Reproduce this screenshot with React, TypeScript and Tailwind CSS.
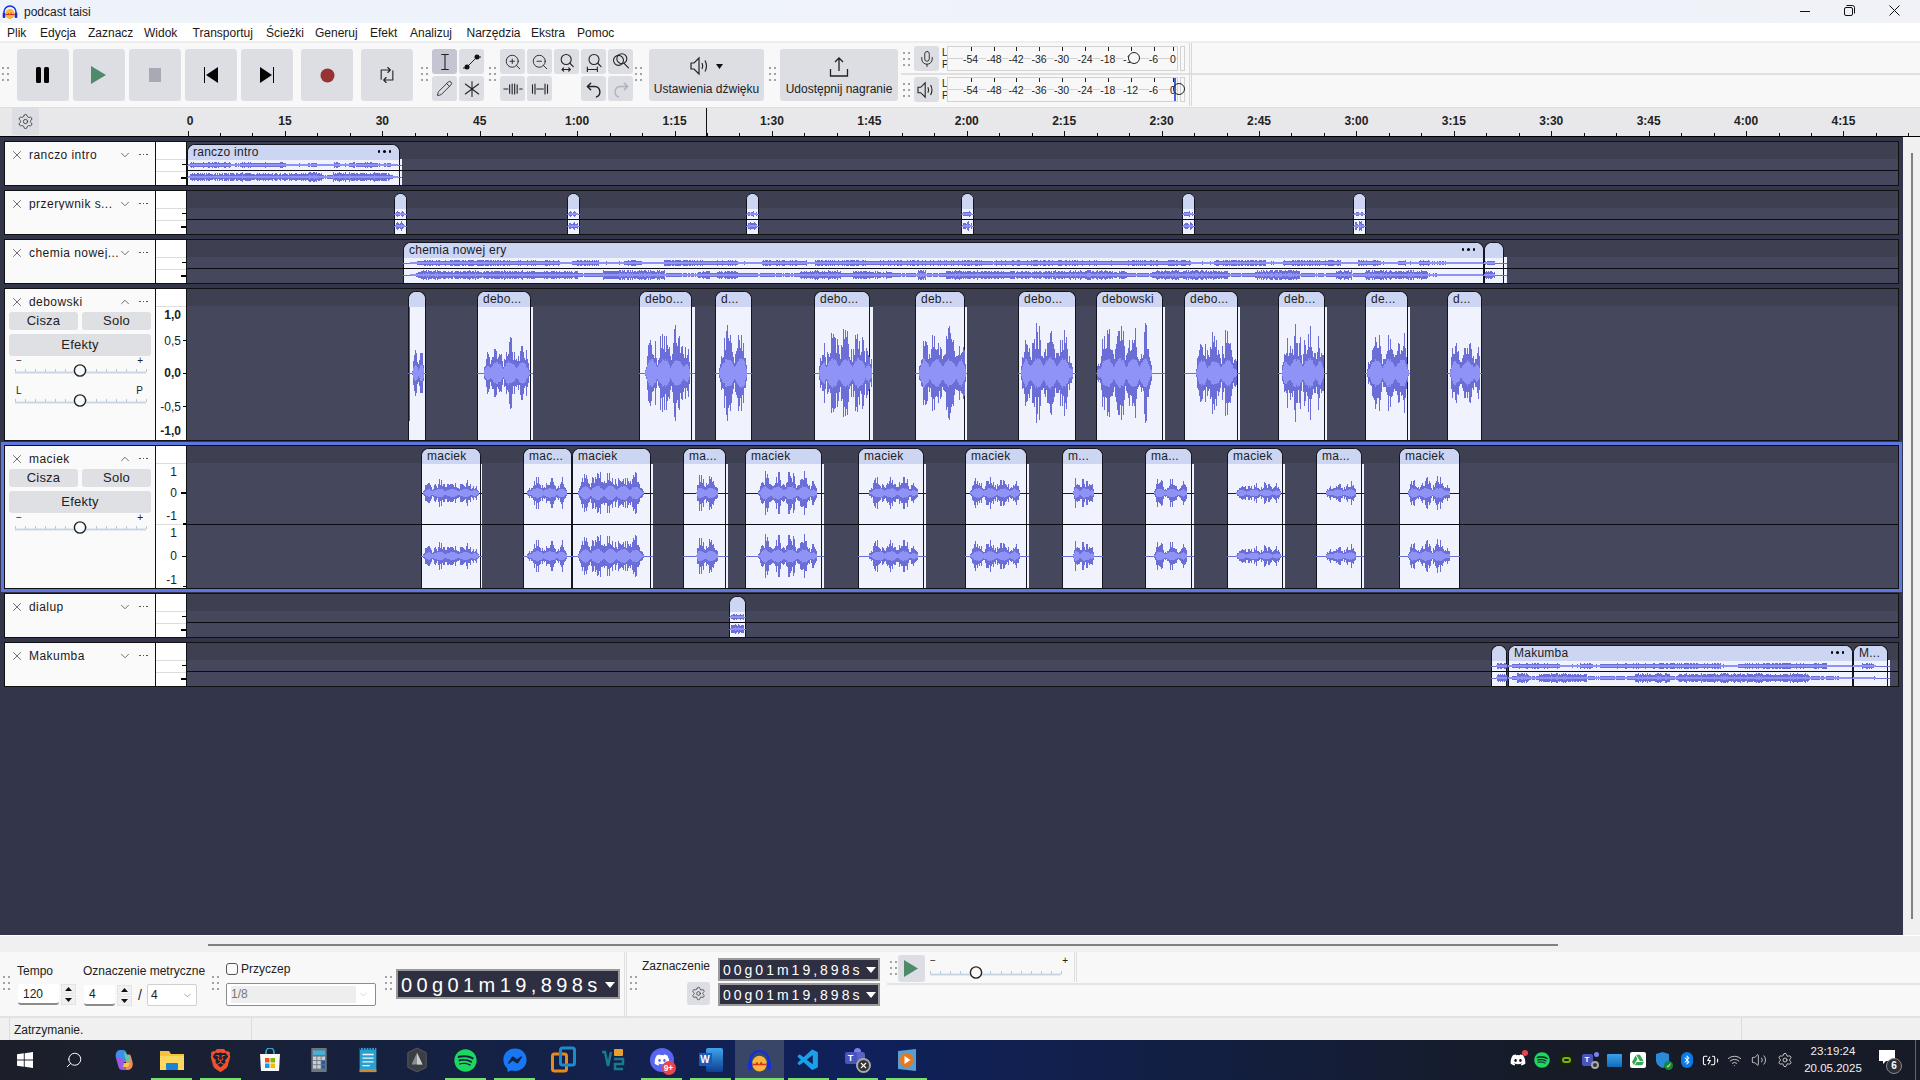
import React from "react";
import { ZoomIn, ZoomOut, Pencil, Mic, Settings, X, ChevronDown, ChevronUp, Wifi, Volume2, BatteryCharging, Search } from "lucide-react";
import { FaSpotify, FaDiscord, FaFacebookMessenger, FaBluetoothB } from "react-icons/fa";
import { SiBrave, SiGoogledrive } from "react-icons/si";
import { VscVscode } from "react-icons/vsc";

const CONTENT_LEFT = 187;

function rng(seed: number) {
  let a = seed >>> 0;
  return () => {
    a = (a + 0x6d2b79f5) >>> 0;
    let t = a;
    t = Math.imul(t ^ (t >>> 15), t | 1);
    t ^= t + Math.imul(t ^ (t >>> 7), t | 61);
    return ((t ^ (t >>> 14)) >>> 0) / 4294967296;
  };
}

type WaveSpec = { c: number; amp: number; lead: number; trail: number; seed: number; music?: boolean; dark?: boolean };

function wavePaths(w: number, s: WaveSpec) {
  const r = rng(s.seed);
  const start = s.lead;
  const end = w - s.trail;
  const len = Math.max(1, end - start);
  let peak = "";
  let rms = "";
  const phase = r() * 6;
  const lobes = Math.max(2, len / 13);
  let prevN = 0.5;
  let level = 0.8;
  let nextSeg = 0;
  for (let x = start; x < end; x++) {
    const t = (x - start) / len;
    let hh: number;
    let q: number;
    if (s.music) {
      if (x >= nextSeg) {
        level = r() > 0.8 ? 0.45 : 0.75 + 0.25 * r();
        nextSeg = x + 6 + Math.floor(r() * 22);
      }
      const edge = Math.min(1, t * 80, (1 - t) * 16);
      hh = Math.max(1, Math.round(s.amp * edge * level * (0.55 + 0.45 * r())));
      q = Math.max(1, Math.round(hh * 0.3));
    } else {
      const env = 0.42 + 0.58 * Math.abs(Math.sin(phase + t * lobes * Math.PI));
      const edge = Math.min(1, t * 9 + 0.25, (1 - t) * 7 + 0.2);
      const n = r() > 0.86 ? 0.9 + 0.1 * r() : 0.35 + 0.5 * r();
      const use = Math.max(n, 0.6 * prevN);
      prevN = n;
      hh = Math.max(1, Math.round(s.amp * env * use * edge));
      q = Math.max(1, Math.round(s.amp * env * edge * 0.3 * (0.8 + 0.2 * r())));
    }
    peak += `M${x + 0.5} ${s.c - hh}V${s.c + hh}`;
    rms += `M${x + 0.5} ${s.c - q}V${s.c + q}`;
  }
  return { peak, rms, start, end };
}

function Wave({ w, spec }: { w: number; spec: WaveSpec }) {
  const { peak, rms, start, end } = wavePaths(w, spec);
  return (
    <g shapeRendering="crispEdges" fill="none">
      <path d={`M0 ${spec.c + 0.5}H${w}`} stroke="#6a6ed8" />
      {spec.dark ? <path d={`M0 ${spec.c + 0.5}H${start}M${end} ${spec.c + 0.5}H${w}`} stroke="#1a1a40" /> : null}
      <path d={peak} stroke="#6a6ed6" />
      <path d={rms} stroke="#8f93f6" />
    </g>
  );
}

type ClipData = {
  x: number;
  w: number;
  title?: string;
  dots?: boolean;
  tail?: number;
  lead?: number;
  trail?: number;
  amp?: number;
  seed: number;
};

function Clip({ d, waves, headerEnd = 18 }: { d: ClipData; waves: WaveSpec[]; headerEnd?: number }) {
  const left = d.x - CONTENT_LEFT - 1;
  const width = d.w + 2;
  const tail = d.tail ?? 0;
  return (
    <>
      <div
        className="absolute top-[2px] bottom-0 rounded-t-[8px] border-x border-t border-[#14151f] bg-[#f0f2fe] overflow-hidden"
        style={{ left, width }}
      >
        <div className="flex items-center justify-between bg-[#ccd5f2] pl-[5px] pr-[8px] pb-[2px] text-[12px] tracking-[0.25px] text-[#1d1d25] leading-none whitespace-nowrap h-[15px]">
          <span>{d.title}</span>
          {d.dots ? (
            <span className="flex gap-[3px]">
              <i className="w-[2.5px] h-[2.5px] rounded-full bg-black" />
              <i className="w-[2.5px] h-[2.5px] rounded-full bg-black" />
              <i className="w-[2.5px] h-[2.5px] rounded-full bg-black" />
            </span>
          ) : null}
        </div>
      </div>
      {tail > 0 ? (
        <div className="absolute bottom-0 bg-[#f0f2fe]" style={{ left: left + width, width: tail, top: headerEnd }} />
      ) : null}
      <svg className="absolute top-0 overflow-visible" style={{ left }} width={width + tail} height={10}>
        {waves.map((s, i) => (
          <Wave key={i} w={width + tail} spec={s} />
        ))}
      </svg>
    </>
  );
}

function Slider({ thumb = 65 }: { thumb?: number }) {
  const w = 131;
  return (
    <svg width={w + 2} height={16} className="block">
      {Array.from({ length: 14 }).map((_, i) => (
        <rect key={i} x={Math.round(i * (w / 13))} y={6} width={1} height={3} fill="#b9c6d4" />
      ))}
      <rect x={0} y={8.5} width={w} height={2} fill="#c9d7e5" />
      <circle cx={thumb} cy={7.5} r={5.6} fill="#fafafa" stroke="#222" strokeWidth={1.4} />
    </svg>
  );
}

function SliderBlock({ l, r, cls = "" }: { l: string; r: string; cls?: string }) {
  return (
    <div className={`px-[10px] ${cls}`}>
      <div className="flex justify-between h-[12px] items-center text-[10px] leading-none text-[#222]">
        <span className="ml-[1px]">{l}</span>
        <span className="mr-[2px]">{r}</span>
      </div>
      <div className="-mt-[4px]">
        <Slider />
      </div>
    </div>
  );
}

function Dots() {
  return (
    <span className="flex gap-[2px]">
      <i className="w-[1.5px] h-[1.5px] bg-[#555]" />
      <i className="w-[1.5px] h-[1.5px] bg-[#555]" />
      <i className="w-[1.5px] h-[1.5px] bg-[#555]" />
    </span>
  );
}

function PanelHead({ name, open }: { name: string; open?: boolean }) {
  return (
    <div className="flex items-center h-[23px] pt-[2px] text-[12px] tracking-[0.45px] text-[#1b1b22]">
      <X size={14} strokeWidth={1.1} className="ml-[5px] text-[#222] shrink-0" />
      <span className="ml-[5px] w-[92px] whitespace-nowrap overflow-hidden leading-none">{name}</span>
      {open ? (
        <ChevronUp size={14} strokeWidth={1.2} className="text-[#333] shrink-0 -ml-[3px]" />
      ) : (
        <ChevronDown size={14} strokeWidth={1.2} className="text-[#333] shrink-0 -ml-[3px]" />
      )}
      <span className="ml-[7px]">
        <Dots />
      </span>
    </div>
  );
}

function Mb({ children, cls }: { children: React.ReactNode; cls: string }) {
  return (
    <div className={`flex items-center justify-center rounded-[3px] bg-[#dfe0e4] text-[13px] tracking-[0.2px] text-[#222] ${cls}`}>{children}</div>
  );
}

function PanelControls() {
  return (
    <div className="px-[4px]">
      <div className="flex gap-[4px]">
        <Mb cls="w-[69px] h-[18px]">Cisza</Mb>
        <Mb cls="w-[69px] h-[18px]">Solo</Mb>
      </div>
      <Mb cls="w-[142px] h-[22px] mt-[4px]">Efekty</Mb>
    </div>
  );
}

function RulerCollapsed() {
  return (
    <div className="relative w-[31px] shrink-0 bg-white border-r border-[#111]">
      <div className="absolute left-0 right-0 top-[17px] h-px bg-[#dcdcdc]" />
      <div className="absolute left-0 right-0 top-[29px] h-px bg-[#dcdcdc]" />
      <div className="absolute right-0 top-[22px] w-[4px] h-px bg-black" />
      <div className="absolute right-0 top-[35px] w-[5px] h-[2px] bg-black" />
    </div>
  );
}

function Track({
  name,
  panel,
  ruler,
  h,
  lineY,
  children,
  selected,
}: {
  name: string;
  panel?: React.ReactNode;
  ruler?: React.ReactNode;
  h: string;
  lineY: string;
  children?: React.ReactNode;
  selected?: boolean;
}) {
  return (
    <div className={`flex w-[1895px] border border-[#111] ${h} ${selected ? "ring-[3px] ring-[#5d76e0]" : ""}`}>
      <div className="w-[151px] shrink-0 bg-[#fafafa] border-r border-[#111]">
        <PanelHead name={name} open={!!panel} />
        {panel}
      </div>
      {ruler ?? <RulerCollapsed />}
      <div className="relative flex-1 bg-[#45485c] overflow-hidden">
        <div className="absolute inset-x-0 top-0 h-[17px] bg-[#3e3f50]" />
        {children}
        <div className={`absolute inset-x-0 h-px bg-[#0c0c12] ${lineY}`} />
      </div>
    </div>
  );
}

const t2Clips = [395, 568, 747, 962, 1183, 1354];
const t4Clips: ClipData[] = [
  { x: 409, w: 16, lead: 4, trail: 2, amp: 30, seed: 11 },
  { x: 478, w: 52, title: "debo...", tail: 2, lead: 7, trail: 3, amp: 40, seed: 12 },
  { x: 640, w: 51, title: "debo...", tail: 3, lead: 6, trail: 5, amp: 50, seed: 13 },
  { x: 716, w: 35, title: "d...", lead: 4, trail: 5, amp: 52, seed: 14 },
  { x: 815, w: 54, title: "debo...", tail: 3, lead: 5, trail: 1, amp: 52, seed: 15 },
  { x: 916, w: 48, title: "deb...", tail: 2, lead: 4, trail: 1, amp: 50, seed: 16 },
  { x: 1019, w: 56, title: "debo...", lead: 3, trail: 3, amp: 54, seed: 17 },
  { x: 1097, w: 65, title: "debowski", tail: 2, lead: 1, trail: 13, amp: 52, seed: 18 },
  { x: 1185, w: 52, title: "debo...", tail: 2, lead: 12, trail: 3, amp: 46, seed: 19 },
  { x: 1279, w: 45, title: "deb...", tail: 2, lead: 4, trail: 3, amp: 52, seed: 20 },
  { x: 1366, w: 41, title: "de...", tail: 2, lead: 2, trail: 1, amp: 48, seed: 21 },
  { x: 1448, w: 33, title: "d...", lead: 3, trail: 2, amp: 44, seed: 22 },
];
const t5Clips: ClipData[] = [
  { x: 422, w: 58, title: "maciek", tail: 1, lead: 2, trail: 3, amp: 15, seed: 31 },
  { x: 524, w: 47, title: "mac...", lead: 4, trail: 5, amp: 17, seed: 32 },
  { x: 573, w: 77, title: "maciek", tail: 2, lead: 6, trail: 9, amp: 25, seed: 33 },
  { x: 684, w: 41, title: "ma...", tail: 2, lead: 13, trail: 10, amp: 20, seed: 34 },
  { x: 746, w: 75, title: "maciek", tail: 2, lead: 13, trail: 7, amp: 23, seed: 35 },
  { x: 859, w: 64, title: "maciek", tail: 2, lead: 11, trail: 8, amp: 17, seed: 36 },
  { x: 966, w: 60, title: "maciek", tail: 2, lead: 5, trail: 9, amp: 17, seed: 37 },
  { x: 1063, w: 39, title: "m...", lead: 11, trail: 9, amp: 18, seed: 38 },
  { x: 1146, w: 45, title: "ma...", tail: 2, lead: 9, trail: 7, amp: 15, seed: 39 },
  { x: 1228, w: 54, title: "maciek", tail: 2, lead: 9, trail: 4, amp: 12, seed: 40 },
  { x: 1317, w: 44, title: "ma...", tail: 2, lead: 10, trail: 8, amp: 13, seed: 41 },
  { x: 1400, w: 59, title: "maciek", lead: 9, trail: 10, amp: 18, seed: 42 },
];

function stereoSmall(seed: number, lead: number, trail: number, music = true): WaveSpec[] {
  return [
    { c: 23, amp: 3.5, lead, trail, seed, music },
    { c: 35, amp: 5.5, lead, trail, seed: seed + 1, music },
  ];
}

function Grip({ cls = "" }: { cls?: string }) {
  return (
    <svg width={7} height={14} className={`shrink-0 ${cls}`}>
      {[0, 6, 12].map((y) => (
        <g key={y}>
          <rect x={0} y={y} width={2} height={2} fill="#a3a3a3" />
          <rect x={5} y={y} width={2} height={2} fill="#a3a3a3" />
        </g>
      ))}
    </svg>
  );
}

function TBtn({ children, active, cls = "" }: { children: React.ReactNode; active?: boolean; cls?: string }) {
  return (
    <div className={`flex items-center justify-center rounded-[3px] ${active ? "bg-[#c3c6d2]" : "bg-[#dddee3]"} ${cls}`}>
      {children}
    </div>
  );
}

function Big({ children }: { children: React.ReactNode }) {
  return <TBtn cls="w-[52px] h-[52px] shrink-0">{children}</TBtn>;
}

function S({ children, size = 20, sw = 1.3 }: { children: React.ReactNode; size?: number; sw?: number }) {
  return (
    <svg width={size} height={size} viewBox="0 0 24 24" fill="none" stroke="#222" strokeWidth={sw} strokeLinecap="round" strokeLinejoin="round">
      {children}
    </svg>
  );
}

function AudacityLogo({ size = 16 }: { size?: number }) {
  return (
    <svg width={size} height={size} viewBox="0 0 24 24">
      <ellipse cx="12" cy="15" rx="7" ry="7.500" fill="#f4b63e" />
      <path d="M5.500 15h3l1-2 2 3 2-3 1.500 2h3.500v1.500h-13Z" fill="#e32b14" />
      <path d="M3 15V12a9 9 0 0 1 18 0v3" fill="none" stroke="#0f2fe0" strokeWidth="2.200" />
      <rect x="1" y="13" width="4" height="8" rx="1.600" fill="#0f2fe0" />
      <rect x="19" y="13" width="4" height="8" rx="1.600" fill="#0f2fe0" />
    </svg>
  );
}

const meterLabels: [string, number][] = [
  ["-54", 970.6],
  ["-48", 994],
  ["-42", 1016],
  ["-36", 1039],
  ["-30", 1061.6],
  ["-24", 1085],
  ["-18", 1107.8],
  ["-12", 1130.6],
  ["-6", 1153.5],
  ["0", 1173],
];

function Meter({ thumb, blue }: { thumb: number; blue?: boolean }) {
  return (
    <div className="flex">
      <div className="w-[7px] text-[10px] leading-[12px] text-[#222] ml-[3px] pt-[1px]">
        <div>L</div>
        <div>P</div>
      </div>
      <div className="relative w-[231px] h-[25px] border border-[#d2d2d2] bg-[#f8f8f8] -ml-[2px]">
        <div className="absolute inset-x-0 top-[11px] h-px bg-[#d2d2d2]" />
        {meterLabels.map(([t, x]) => (
          <React.Fragment key={t}>
            <div className="absolute top-0 w-px h-[4px] bg-[#222]" style={{ left: x - 948 }} />
            <span
              className="absolute top-[6px] -translate-x-1/2 bg-[#f8f8f8] text-[10.5px] leading-[12px] text-[#222]"
              style={{ left: x - 948 }}
            >
              {t}
            </span>
          </React.Fragment>
        ))}
        {blue ? <div className="absolute top-0 bottom-0 left-[226px] w-[2px] bg-[#4a62d8]" /> : null}
        <div
          className={`absolute top-[5px] w-[12px] h-[12px] rounded-full border-[1.5px] border-[#222] -translate-x-1/2 ${blue ? "" : "bg-[#f8f8f8]"}`}
          style={{ left: thumb - 948 }}
        />
      </div>
      <div className="w-[5px] h-[25px] border border-[#d2d2d2] bg-[#f8f8f8] ml-[2px]" />
      <div className="w-[3px] h-[32px] -mt-[3px] border-x border-[#d8d8d8] ml-[4px]" />
    </div>
  );
}

const menu = [
  ["Plik", "w-[33px]"],
  ["Edycja", "w-[48px]"],
  ["Zaznacz", "w-[56px]"],
  ["Widok", "w-[48.6px]"],
  ["Transportuj", "w-[73.4px]"],
  ["Ścieżki", "w-[49px]"],
  ["Generuj", "w-[55px]"],
  ["Efekt", "w-[40px]"],
  ["Analizuj", "w-[56.5px]"],
  ["Narzędzia", "w-[64.5px]"],
  ["Ekstra", "w-[46px]"],
  ["Pomoc", "w-[50px]"],
];

const rulerLabels = ["0", "15", "30", "45", "1:00", "1:15", "1:30", "1:45", "2:00", "2:15", "2:30", "2:45", "3:00", "3:15", "3:30", "3:45", "4:00", "4:15"];

function TimeBox({ big }: { big?: boolean }) {
  return big ? (
    <div className="flex items-center w-[224px] h-[30px] border-2 border-double border-[#9a9a9a] bg-[#2e3042] pl-[3px] pt-[2px] text-white text-[20px] tracking-[4.4px] leading-none whitespace-nowrap">
      <span>00g01m19,898s</span>
      <svg width="10" height="6" className="ml-auto mr-[3px] shrink-0"><path d="M0 0H10L5 6Z" fill="#fff" /></svg>
    </div>
  ) : (
    <div className="flex items-center w-[162px] h-[23px] border-2 border-double border-[#9a9a9a] bg-[#2e3042] pl-[3px] text-white text-[14px] tracking-[3px] leading-none whitespace-nowrap">
      <span>00g01m19,898s</span>
      <svg width="10" height="6" className="ml-auto mr-[2px] shrink-0"><path d="M0 0H10L5 6Z" fill="#fff" /></svg>
    </div>
  );
}

function Spin() {
  return (
    <div className="flex flex-col gap-[1px] w-[15px] ml-[2px]">
      <div className="flex h-[10px] items-center justify-center bg-[#f0f0f0] border border-[#e4e4e4]">
        <svg width="7" height="4"><path d="M0 4H7L3.500 0Z" fill="#111" /></svg>
      </div>
      <div className="flex h-[10px] items-center justify-center bg-[#f0f0f0] border border-[#e4e4e4]">
        <svg width="7" height="4"><path d="M0 0H7L3.500 4Z" fill="#111" /></svg>
      </div>
    </div>
  );
}

function Field({ cls, children }: { cls: string; children: React.ReactNode }) {
  return <div className={`flex items-center bg-white border-b-2 border-[#8c8c8c] rounded-[3px] pl-[5px] text-[12px] text-[#222] h-[21px] ${cls}`}>{children}</div>;
}

function TrayWrap({ children, x }: { children: React.ReactNode; x: string }) {
  return <div className={`flex items-center justify-center h-[24px] shrink-0 ${x}`}>{children}</div>;
}

const taskIcons: { el: React.ReactNode; on?: boolean; active?: boolean }[] = [
  {
    el: (
      <svg width="16" height="16" viewBox="0 0 16 16">
        <path d="M0 2.200 6.800 1.300V7.500H0ZM7.700 1.200 16 0V7.500H7.700ZM0 8.400H6.800V14.700L0 13.800ZM7.700 8.400H16V16L7.700 14.800Z" fill="#fff" />
      </svg>
    ),
  },
  { el: <Search size={18} strokeWidth={1.3} className="text-white -scale-x-100" /> },
  {
    el: (
      <svg width="24" height="24" viewBox="0 0 24 24" fill="none">
        <path d="M9 2h3c2 0 3 1 3.500 3l2.500 9H8.500L5 10C4 6 5.500 2 9 2Z" fill="#3d8fe8" />
        <path d="M5 10l2.500 9c.5 2 2 3 4 3h2c2 0 3-1 1.500-3l-4-9Z" fill="#9a5be0" />
        <path d="M15 22h2c3.500 0 5.500-4 4.500-8L20 8.500c-.5-2-2-2.500-3.500-1.500L15 14Z" fill="#f08a5a" />
        <path d="M13 4l4 3 3 2-3 6-3-5Z" fill="#5fc4a8" />
        <path d="M12 19h5l2-4h-6Z" fill="#f2c744" />
      </svg>
    ),
  },
  {
    on: true,
    el: (
      <svg width="24" height="24" viewBox="0 0 24 24">
        <path d="M0 3h9l2 3h13v16H0Z" fill="#f5c33b" />
        <path d="M0 8h24v14H0Z" fill="#fcd860" />
        <rect x="6" y="15" width="12" height="7" rx="1" fill="#1a82d8" />
      </svg>
    ),
  },
  { on: true, el: <SiBrave size={23} color="#f0502a" /> },
  {
    el: (
      <svg width="24" height="24" viewBox="0 0 24 24">
        <path d="M8 7V4a4 4 0 0 1 8 0v3" fill="none" stroke="#35b2d8" strokeWidth="1.500" />
        <path d="M2 6h20l-1 17H3Z" fill="#f8f8f8" />
        <rect x="7" y="10" width="4.500" height="4.500" fill="#f25022" />
        <rect x="12.500" y="10" width="4.500" height="4.500" fill="#7fba00" />
        <rect x="7" y="15.500" width="4.500" height="4.500" fill="#00a4ef" />
        <rect x="12.500" y="15.500" width="4.500" height="4.500" fill="#ffb900" />
      </svg>
    ),
  },
  {
    el: (
      <svg width="20" height="24" viewBox="0 0 20 28">
        <rect x="1" y="0" width="18" height="28" rx="1" fill="#6c7680" />
        <rect x="3" y="3" width="14" height="5" fill="#3fb4e0" />
        {[10, 15, 20].map((y) =>
          [3, 8, 13].map((x) => <rect key={`${x}${y}`} x={x} y={y} width="4" height="4" fill={x === 13 && y > 10 ? "#1f5fa8" : "#c8ced4"} />)
        )}
      </svg>
    ),
  },
  {
    el: (
      <svg width="20" height="26" viewBox="0 0 20 28">
        <rect x="1" y="1" width="18" height="26" fill="#2ba0d0" />
        <rect x="1" y="24" width="18" height="3" fill="#c88a3a" />
        <path d="M4 8h12M4 12h12M4 16h12M4 20h8" stroke="#e6f6fc" strokeWidth="1.500" />
        <path d="M2 1v2M5 1v2M8 1v2M11 1v2M14 1v2M17 1v2" stroke="#123" strokeWidth="1" />
      </svg>
    ),
  },
  {
    el: (
      <svg width="22" height="26" viewBox="0 0 24 28">
        <path d="M12 1 22 6v16l-10 5-10-5V6Z" fill="#3a3d42" stroke="#5a5d62" />
        <path d="M12 6 18 19H6Z" fill="#8a8d92" />
        <path d="M12 6 18 19H12Z" fill="#c8cbd0" />
      </svg>
    ),
  },
  { on: true, el: <FaSpotify size={23} color="#1ed760" /> },
  { on: true, el: <FaFacebookMessenger size={24} color="#1877f2" /> },
  {
    el: (
      <svg width="25" height="28" viewBox="0 0 25 28">
        <rect x="1.500" y="8" width="14" height="17" rx="2" fill="none" stroke="#e8891a" strokeWidth="3" />
        <rect x="9.500" y="2" width="14" height="17" rx="2" fill="none" stroke="#1b8ad0" strokeWidth="3" />
      </svg>
    ),
  },
  {
    el: (
      <svg width="24" height="26" viewBox="0 0 24 26">
        <path d="M1 5h3l3 14 3-14" fill="none" stroke="#1b7a8a" strokeWidth="2.500" />
        <rect x="13" y="2" width="9" height="7" rx="1" fill="#e8a030" />
        <path d="M13 12h9v5h-8v5h8" fill="none" stroke="#1b7a8a" strokeWidth="2.500" />
      </svg>
    ),
  },
  {
    on: true,
    el: (
      <span className="relative flex items-center justify-center w-[24px] h-[24px] rounded-full bg-[#5865f2]">
        <FaDiscord size={16} color="#fff" />
        <span className="absolute -right-[2px] bottom-[-3px] flex items-center justify-center w-[14px] h-[14px] rounded-full bg-[#e8454f] text-[8.5px] font-bold text-white leading-none">9+</span>
      </span>
    ),
  },
  {
    on: true,
    el: (
      <span className="relative flex w-[24px] h-[24px]">
        <span className="absolute right-0 top-0 w-[17px] h-[24px] bg-gradient-to-b from-[#41a5ee] to-[#103f91] rounded-[2px]" />
        <span className="absolute left-0 top-[5px] flex items-center justify-center w-[13px] h-[13px] bg-[#185abd] text-white text-[10px] font-bold leading-none">W</span>
      </span>
    ),
  },
  { on: true, active: true, el: <AudacityLogo size={25} /> },
  { on: true, el: <VscVscode size={25} color="#1b9fe8" /> },
  {
    on: true,
    el: (
      <span className="relative flex w-[26px] h-[26px]">
        <span className="absolute left-[9px] top-[1px] w-[7px] h-[7px] rounded-full bg-[#7b83eb]" />
        <span className="absolute left-[8px] top-[5px] w-[12px] h-[12px] rounded-[3px] bg-[#5a62c4]" />
        <span className="absolute left-0 top-[5px] flex items-center justify-center w-[12px] h-[12px] rounded-[2px] bg-[#4b53bc] text-white text-[9px] font-bold leading-none">T</span>
        <span className="absolute right-0 bottom-0 flex items-center justify-center w-[15px] h-[15px] rounded-full bg-[#2f3136] border-2 border-[#a8a8a8]">
          <X size={9} color="#fff" strokeWidth={3} />
        </span>
      </span>
    ),
  },
  {
    on: true,
    el: (
      <svg width="22" height="24" viewBox="0 0 22 24">
        <path d="M2 3 20 1v22L2 21Z" fill="#5a9ed0" />
        <rect x="4" y="5" width="13" height="14" rx="6" fill="#e8781e" />
        <path d="M8.500 8v8l6-4Z" fill="#fff" />
      </svg>
    ),
  },
];

export default function App() {
  return (
    <div className="w-[1920px] h-[1080px] overflow-hidden flex flex-col [font-family:'Liberation_Sans',sans-serif] text-[#222]">
      {/* Title bar */}
      <div className="flex items-center h-[23px] shrink-0 bg-gradient-to-r from-[#eef3fb] to-[#f0f2f8]">
        <div className="ml-[2px]">
          <AudacityLogo size={16} />
        </div>
        <span className="ml-[6px] text-[12px] text-[#1a1a1a]">podcast taisi</span>
        <div className="ml-auto flex mr-[3px] -mt-[2px]">
          <div className="flex items-center justify-center w-[45px]">
            <svg width="10" height="10"><path d="M0 5.500H10" stroke="#111" /></svg>
          </div>
          <div className="flex items-center justify-center w-[45px]">
            <svg width="11" height="11" fill="none" stroke="#111"><rect x="0.500" y="2.500" width="8" height="8" rx="1.500" /><path d="M2.500 0.500H8.500a2 2 0 0 1 2 2V8.500" /></svg>
          </div>
          <div className="flex items-center justify-center w-[45px]">
            <svg width="11" height="11" stroke="#111"><path d="M0.500 0.500 10.500 10.500M10.500 0.500 0.500 10.500" /></svg>
          </div>
        </div>
      </div>

      {/* Menu */}
      <div className="flex items-center h-[18px] shrink-0 bg-white pl-[7px] pt-[2px] text-[12px] text-[#1a1a1a]">
        {menu.map(([t, w]) => (
          <span key={t} className={w}>{t}</span>
        ))}
      </div>

      {/* Main toolbar */}
      <div className="flex h-[67px] shrink-0 bg-[#f8f8f8] border-t-2 border-b border-t-[#eeeeee] border-b-[#dedede] pl-[2px]">
        <Grip cls="mt-[24px]" />
        <div className="flex gap-[4px] ml-[8px] mt-[6px] h-[52px]">
          <Big>
            <svg width="14" height="16"><rect x="0" y="0" width="5" height="16" rx="1.500" fill="#050505" /><rect x="8" y="0" width="5" height="16" rx="1.500" fill="#050505" /></svg>
          </Big>
          <Big>
            <svg width="16" height="18"><path d="M0 0 15 9 0 18Z" fill="#4f8a6b" /></svg>
          </Big>
          <Big>
            <svg width="13" height="15"><rect width="12" height="14" fill="#a8a9b2" /></svg>
          </Big>
          <Big>
            <svg width="15" height="16"><rect x="0" y="0" width="1" height="16" fill="#050505" /><path d="M14 0V16L2 8Z" fill="#050505" /></svg>
          </Big>
          <Big>
            <svg width="15" height="16"><rect x="13" y="0" width="1" height="16" fill="#050505" /><path d="M0 0V16L12 8Z" fill="#050505" /></svg>
          </Big>
        </div>
        <div className="ml-[8px] mt-[6px]">
          <Big>
            <svg width="15" height="15"><circle cx="7.500" cy="7.500" r="7" fill="#973333" /></svg>
          </Big>
        </div>
        <div className="ml-[8px] mt-[6px]">
          <Big>
            <S size={20}>
              <path d="M5 17V6h11M13 3l3 3-3 3M19 7v11H8M11 15l-3 3 3 3" />
            </S>
          </Big>
        </div>
        <Grip cls="ml-[8px] mt-[24px]" />
        <div className="ml-[4px] mt-[6px] grid grid-cols-[25px_25px] grid-rows-[25px_25px] gap-x-[2px] gap-y-[2px]">
          <TBtn active>
            <S>
              <path d="M8 3h8M8 21h8M12 3v18" />
            </S>
          </TBtn>
          <TBtn>
            <svg width="20" height="20" viewBox="0 0 20 20"><path d="M1 16H4L15 5H19" stroke="#222" fill="none" /><circle cx="5" cy="15" r="2.500" fill="#111" /><circle cx="15" cy="5" r="2.500" fill="#111" /></svg>
          </TBtn>
          <TBtn>
            <Pencil size={17} strokeWidth={1.2} color="#222" />
          </TBtn>
          <TBtn>
            <S>
              <path d="M12 3v18M4 6l16 12M20 6 4 18" />
            </S>
          </TBtn>
        </div>
        <Grip cls="ml-[5px] mt-[24px]" />
        <div className="ml-[4px] mt-[6px] grid grid-cols-[25px_25px_25px_25px_25px] grid-rows-[25px_25px] gap-x-[2px] gap-y-[2px]">
          <TBtn><ZoomIn size={18} strokeWidth={1.2} color="#222" /></TBtn>
          <TBtn><ZoomOut size={18} strokeWidth={1.2} color="#222" /></TBtn>
          <TBtn>
            <S size={20}>
              <circle cx="11" cy="9" r="6" /><path d="m15.500 13.500 4 4M6 21h10M8 19l-2 2 2 2M14 19l2 2-2 2" />
            </S>
          </TBtn>
          <TBtn>
            <S size={20}>
              <circle cx="12" cy="9" r="6" /><path d="m16.500 13.500 4 4M4 21h12M4 18v6M16 18v6" />
            </S>
          </TBtn>
          <TBtn>
            <S size={20}>
              <circle cx="9" cy="10" r="6" /><circle cx="13" cy="8" r="6" /><path d="m16 14 5 5" />
            </S>
          </TBtn>
          <TBtn>
            <S size={20} sw={1.3}>
              <path d="M1 12h5M20 12h3M8 7v10M11 6v12M14 6v12M17 7v10" />
            </S>
          </TBtn>
          <TBtn>
            <S size={20} sw={1.3}>
              <path d="M8 12h8M3 7v10M6 6v12M18 6v12M21 7v10" />
            </S>
          </TBtn>
          <div />
          <TBtn>
            <S size={20} sw={1.7}>
              <path d="M8 5 4 9l4 4M4 9h9a6.500 6.500 0 0 1 2 12.500" />
            </S>
          </TBtn>
          <TBtn>
            <svg width="20" height="20" viewBox="0 0 24 24" fill="none" stroke="#b0b1b8" strokeWidth="1.700" strokeLinecap="round" strokeLinejoin="round">
              <path d="m16 5 4 4-4 4M20 9h-9a6.500 6.500 0 0 0-2 12.500" />
            </svg>
          </TBtn>
        </div>
        <Grip cls="ml-[2px] mt-[24px]" />
        <TBtn cls="flex-col w-[115px] h-[52px] ml-[7px] mt-[6px] shrink-0">
          <div className="flex items-center gap-[4px] h-[22px] mt-[1px]">
            <svg width="22" height="20" viewBox="0 0 22 20" fill="none" stroke="#222" strokeWidth="1.200">
              <path d="M1 7h3l5-5v16l-5-5H1Z" />
              <path d="M12 7q1.500 3 0 6M15 4.500q3 5.500 0 11" />
            </svg>
            <svg width="7" height="5"><path d="M0 0H7L3.500 5Z" fill="#111" /></svg>
          </div>
          <span className="mt-[5px] text-[12px] leading-[14px] text-[#222] whitespace-nowrap">Ustawienia dźwięku</span>
        </TBtn>
        <Grip cls="ml-[5px] mt-[24px]" />
        <TBtn cls="flex-col w-[118px] h-[52px] ml-[4px] mt-[6px] shrink-0">
          <svg width="20" height="22" viewBox="0 0 20 22" fill="none" stroke="#222" strokeWidth="1.300" className="mt-[1px]">
            <path d="M1.500 13v7h17v-7M10 15V2M6 6l4-4 4 4" />
          </svg>
          <span className="mt-[4px] text-[12px] leading-[14px] text-[#222] whitespace-nowrap">Udostępnij nagranie</span>
        </TBtn>
        <div className="ml-[3px] flex-1 flex flex-col">
          <div className="flex items-start h-[32px] pt-[3px] border-b-2 border-[#e0e0e0]">
            <Grip cls="ml-[2px] mt-[6px]" />
            <TBtn cls="w-[25px] h-[25px] ml-[4px]">
              <Mic size={18} strokeWidth={1.2} color="#222" />
            </TBtn>
            <Meter thumb={1134} />
          </div>
          <div className="flex items-start pt-[2px]">
            <Grip cls="ml-[2px] mt-[6px]" />
            <TBtn cls="w-[25px] h-[25px] ml-[4px]">
              <svg width="20" height="18" viewBox="0 0 22 20" fill="none" stroke="#222" strokeWidth="1.200">
                <path d="M1 7h3l5-5v16l-5-5H1Z" />
                <path d="M12 7q1.500 3 0 6M15 4.500q3 5.500 0 11" />
              </svg>
            </TBtn>
            <Meter thumb={1179} blue />
          </div>
        </div>
      </div>

      {/* Timeline ruler */}
      <div className="relative flex items-start h-[28px] shrink-0 bg-[#e8e8ea]">
        <TBtn cls="w-[27px] h-[27px] ml-[12px]">
          <Settings size={17} strokeWidth={1.2} color="#333" />
        </TBtn>
        <svg width="1920" height="28" className="absolute left-0 top-0">
          {Array.from({ length: 54 }).map((_, i) => {
            const x = Math.round(187.5 + 32.47 * i);
            return <rect key={i} x={x} y={i % 3 === 0 ? 23 : 25} width="1" height={i % 3 === 0 ? 5 : 3} fill="#111" />;
          })}
          <rect x="706" y="0" width="1" height="28" fill="#111" />
        </svg>
        {rulerLabels.map((t, i) => (
          <span
            key={t}
            className="absolute top-[6px] -translate-x-1/2 text-[12px] leading-[14px] font-bold text-[#222]"
            style={{ left: i === 0 ? 190 : 187.5 + 97.41 * i }}
          >
            {t}
          </span>
        ))}
      </div>

      {/* Tracks */}
      <div className="flex h-[799px] shrink-0">
        <div className="flex-1 bg-[#33364a] border-t border-black pt-[4px] pl-[4px] flex flex-col gap-[4px]">
          <Track name="ranczo intro" h="h-[45px]" lineY="top-[28px]">
            <Clip d={{ x: 188, w: 211, title: "ranczo intro", dots: true, tail: 2, seed: 1 }} waves={stereoSmall(1, 1, 4)} headerEnd={17} />
          </Track>
          <Track name="przerywnik s..." h="h-[45px]" lineY="top-[28px]">
            {t2Clips.map((x, i) => (
              <Clip key={x} d={{ x, w: 11, seed: 2 + i }} waves={stereoSmall(50 + i, 1, 2, false)} headerEnd={17} />
            ))}
          </Track>
          <Track name="chemia nowej..." h="h-[45px]" lineY="top-[28px]">
            <Clip d={{ x: 404, w: 1079, title: "chemia nowej ery", dots: true, seed: 3 }} waves={stereoSmall(3, 7, 1)} headerEnd={17} />
            <Clip d={{ x: 1485, w: 18, tail: 3, seed: 4 }} waves={[{ c: 23, amp: 3, lead: 0, trail: 12, seed: 4, music: true }, { c: 35, amp: 5, lead: 0, trail: 12, seed: 5, music: true }]} headerEnd={17} />
          </Track>
          <Track
            name="debowski"
            h="h-[153px]"
            lineY="hidden"
            panel={
              <>
                <PanelControls />
                <SliderBlock l="−" r="+" cls="-mt-[1px]" />
                <SliderBlock l="L" r="P" cls="mt-[6px]" />
              </>
            }
            ruler={
              <div className="relative w-[31px] shrink-0 bg-white border-r border-[#111] text-[12px] leading-[14px]">
                <div className="absolute left-0 right-0 top-[17px] h-px bg-[#dcdcdc]" />
                {[
                  ["1,0", "top-[19px]", "font-bold"],
                  ["0,5", "top-[45px]", ""],
                  ["0,0", "top-[77px]", "font-bold"],
                  ["-0,5", "top-[111px]", ""],
                  ["-1,0", "top-[135px]", "font-bold"],
                ].map(([t, p, c]) => (
                  <span key={t} className={`absolute right-[5px] ${p} ${c}`}>{t}</span>
                ))}
                <div className="absolute right-0 top-[51px] w-[3px] h-px bg-black" />
                <div className="absolute right-0 top-[84px] w-[3px] h-px bg-black" />
                <div className="absolute right-0 top-[117px] w-[3px] h-px bg-black" />
              </div>
            }
          >
            {t4Clips.map((d) => (
              <Clip key={d.seed} d={d} waves={[{ c: 84, amp: d.amp ?? 40, lead: d.lead ?? 3, trail: d.trail ?? 3, seed: d.seed }]} />
            ))}
            <div className="absolute left-[222px] top-[18px] h-[114px] w-px bg-[#b03a78]" />
          </Track>
          <Track
            name="maciek"
            h="h-[144px]"
            lineY="top-[78px]"
            selected
            panel={
              <>
                <PanelControls />
                <SliderBlock l="−" r="+" cls="-mt-[1px]" />
              </>
            }
            ruler={
              <div className="relative w-[31px] shrink-0 bg-white border-r border-[#111] text-[12px] leading-[14px]">
                <div className="absolute left-0 right-0 top-[17px] h-px bg-[#dcdcdc]" />
                <div className="absolute left-0 right-0 top-[78px] h-px bg-[#dcdcdc]" />
                {[
                  ["1", "top-[19px]"],
                  ["0", "top-[40px]"],
                  ["-1", "top-[63px]"],
                  ["1", "top-[80px]"],
                  ["0", "top-[103px]"],
                  ["-1", "top-[127px]"],
                ].map(([t, p], i) => (
                  <span key={i} className={`absolute right-[9px] ${p}`}>{t}</span>
                ))}
                <div className="absolute right-0 top-[46px] w-[5px] h-[2px] bg-black" />
                <div className="absolute right-0 top-[77px] w-[3px] h-[2px] bg-black" />
                <div className="absolute right-0 top-[110px] w-[4px] h-px bg-black" />
                <div className="absolute right-0 top-[140px] w-[3px] h-px bg-black" />
              </div>
            }
          >
            {t5Clips.map((d) => (
              <Clip
                key={d.seed}
                d={d}
                waves={[
                  { c: 47, amp: d.amp ?? 15, lead: d.lead ?? 3, trail: d.trail ?? 3, seed: d.seed, dark: true },
                  { c: 110, amp: d.amp ?? 15, lead: d.lead ?? 3, trail: d.trail ?? 3, seed: d.seed },
                ]}
              />
            ))}
          </Track>
          <Track name="dialup" h="h-[45px]" lineY="top-[28px]">
            <Clip d={{ x: 730, w: 15, seed: 6 }} waves={stereoSmall(6, 1, 2)} headerEnd={17} />
          </Track>
          <Track name="Makumba" h="h-[45px]" lineY="top-[28px]">
            <Clip d={{ x: 1492, w: 14, seed: 7 }} waves={stereoSmall(7, 5, 0)} headerEnd={17} />
            <Clip d={{ x: 1509, w: 343, title: "Makumba", dots: true, seed: 8 }} waves={stereoSmall(8, 0, 1)} headerEnd={17} />
            <Clip d={{ x: 1854, w: 33, title: "M...", tail: 2, seed: 9 }} waves={[{ c: 23, amp: 3, lead: 0, trail: 14, seed: 9, music: true }, { c: 35, amp: 3, lead: 0, trail: 14, seed: 10, music: true }]} headerEnd={17} />
          </Track>
        </div>
        <div className="flex justify-center w-[17px] shrink-0 bg-[#f0f0f0] border-t border-black pt-[16px]">
          <div className="w-[2px] h-[766px] bg-[#808080] ml-[1px]" />
        </div>
      </div>

      {/* Horizontal scroll */}
      <div className="h-[17px] shrink-0 bg-[#f0f0f0] border-t border-white pl-[208px] pt-[8px]">
        <div className="w-[1350px] h-[2px] bg-[#808080]" />
      </div>

      {/* Bottom toolbar */}
      <div className="flex h-[66px] shrink-0 bg-[#f8f8f8] border-b-2 border-[#e2e2e2] pl-[3px] text-[12px]">
        <Grip cls="mt-[24px]" />
        <div className="ml-[7px] w-[66px] pt-[11px]">
          <div className="h-[16px] leading-[16px]">Tempo</div>
          <div className="flex mt-[5px] ml-[1px]">
            <Field cls="w-[41px]">120</Field>
            <Spin />
          </div>
        </div>
        <div className="w-[120px] pt-[11px]">
          <div className="h-[16px] leading-[16px] whitespace-nowrap">Oznaczenie metryczne</div>
          <div className="flex items-center mt-[5px] ml-[1px]">
            <Field cls="w-[31px]">4</Field>
            <Spin />
            <span className="ml-[6px] w-[9px] text-[14px]">/</span>
            <div className="flex items-center justify-between w-[50px] h-[22px] bg-white border border-[#d0d0d0] rounded-[2px] pl-[3px] pr-[3px]">
              4
              <ChevronDown size={11} strokeWidth={1} color="#444" />
            </div>
          </div>
        </div>
        <Grip cls="ml-[9px] mt-[24px]" />
        <div className="ml-[7px] w-[150px] pt-[11px]">
          <div className="flex items-center h-[12px]">
            <div className="w-[12px] h-[12px] border border-[#555] rounded-[3px] bg-[#fafafa]" />
            <span className="ml-[3px]">Przyczep</span>
          </div>
          <div className="flex items-center justify-between w-[150px] h-[23px] mt-[8px] bg-white border border-[#8c8c8c] rounded-[2px] pl-[4px] pr-[6px] text-[#777]">
            <span className="w-[125px] h-[17px] bg-[#eeeeee] leading-[17px]">1/8</span>
            <ChevronDown size={11} strokeWidth={1} color="#aaa" />
          </div>
        </div>
        <Grip cls="ml-[9px] mt-[24px]" />
        <div className="ml-[4px] pt-[17px]">
          <TimeBox big />
        </div>
        <div className="w-[3px] ml-[4px] h-[66px] border-x border-[#dedede]" />
        <Grip cls="ml-[3px] mt-[24px]" />
        <div className="ml-[6px] w-[67px] flex flex-col items-end pt-[6px]">
          <span className="h-[16px] leading-[16px] whitespace-nowrap">Zaznaczenie</span>
          <TBtn cls="w-[23px] h-[23px] mt-[8px]">
            <Settings size={15} strokeWidth={1.2} color="#333" />
          </TBtn>
        </div>
        <div className="ml-[8px] pt-[6px] flex flex-col gap-[2px]">
          <TimeBox />
          <TimeBox />
        </div>
        <div className="flex-1 flex flex-col ml-[7px]">
          <div className="flex items-start h-[33px] pt-[3px] border-b-2 border-[#e4e4e4]">
            <Grip cls="ml-[3px] mt-[6px]" />
            <TBtn cls="w-[27px] h-[27px] ml-[1px]">
              <svg width="15" height="17"><path d="M0 0 14 8.500 0 17Z" fill="#4f8a6b" /></svg>
            </TBtn>
            <div className="ml-[5px] w-[138px] pt-[2px]">
              <div className="flex justify-between h-[8px] items-center text-[10px] leading-none">
                <span>−</span>
                <span>+</span>
              </div>
              <Slider thumb={46} />
            </div>
            <div className="w-[3px] h-[30px] ml-[6px] -mt-[3px] border-x border-[#dedede]" />
          </div>
        </div>
      </div>

      {/* Status */}
      <div className="flex items-center h-[22px] shrink-0 bg-[#f0f0f0] text-[12px] text-[#222]">
        <div className="w-[243px] ml-[9px] h-full border-x border-[#dcdcdc] pl-[4px] leading-[24px]">Zatrzymanie.</div>
        <div className="ml-auto mr-[178px] w-px h-full bg-[#dcdcdc]" />
      </div>

      {/* Taskbar */}
      <div className="flex items-center h-[40px] shrink-0 bg-gradient-to-r from-[#1c1f28] via-[#0f205c] via-45% to-[#161b27] to-80% text-white">
        <div className="flex">
          {taskIcons.map((t, i) => (
            <div key={i} className={`relative flex items-center justify-center w-[49px] h-[40px] ${t.active ? "bg-[#3a4668]" : ""}`}>
              {t.el}
              {t.on ? <div className={`absolute bottom-0 h-[2px] bg-[#74e26a] ${t.active ? "inset-x-0" : "inset-x-[4px]"}`} /> : null}
            </div>
          ))}
        </div>
        <div className="ml-auto flex items-center">
          <TrayWrap x="w-[24px]"><span className="relative"><FaDiscord size={16} color="#fff" /><i className="absolute -right-[2px] -top-[2px] w-[6px] h-[6px] rounded-full bg-[#e8454f]" /></span></TrayWrap>
          <TrayWrap x="w-[24px]"><FaSpotify size={16} color="#1ed760" /></TrayWrap>
          <TrayWrap x="w-[24px]">
            <span className="flex items-center justify-center w-[15px] h-[15px] bg-[#1a1f16]"><i className="w-[9px] h-[6px] rounded-full border-2 border-[#76b900]" /></span>
          </TrayWrap>
          <TrayWrap x="w-[24px]">
            <span className="relative flex w-[17px] h-[17px]">
              <span className="absolute left-0 top-[2px] flex items-center justify-center w-[11px] h-[12px] rounded-[2px] bg-[#4b53bc] text-white text-[8px] font-bold leading-none">T</span>
              <span className="absolute right-0 top-0 w-[5px] h-[5px] rounded-full bg-[#7b83eb]" />
              <span className="absolute right-0 bottom-0 w-[8px] h-[8px] rounded-full border-2 border-[#aaa] bg-[#333]" />
            </span>
          </TrayWrap>
          <TrayWrap x="w-[24px]"><span className="w-[15px] h-[13px] bg-gradient-to-b from-[#3aa0e8] to-[#0f6cbd] rounded-[1px]" /></TrayWrap>
          <TrayWrap x="w-[24px]">
            <span className="flex items-center justify-center w-[16px] h-[16px] bg-white rounded-[2px]"><SiGoogledrive size={12} color="#34a853" /></span>
          </TrayWrap>
          <TrayWrap x="w-[25px]">
            <span className="relative flex">
              <svg width="15" height="16" viewBox="0 0 15 16"><path d="M7.500 0 14 2v6c0 4-3 6.500-6.500 8C4 14.500 1 12 1 8V2Z" fill="#2b8ad8" /></svg>
              <span className="absolute -right-[3px] -bottom-[2px] flex items-center justify-center w-[9px] h-[9px] rounded-full bg-[#138a3a] text-[7px] leading-none">✓</span>
            </span>
          </TrayWrap>
          <TrayWrap x="w-[23px]">
            <span className="flex items-center justify-center w-[12px] h-[16px] rounded-[6px] bg-[#0a7ae8]"><FaBluetoothB size={10} color="#fff" /></span>
          </TrayWrap>
          <TrayWrap x="w-[24px]"><BatteryCharging size={17} strokeWidth={1.5} color="#fff" /></TrayWrap>
          <TrayWrap x="w-[25px]"><Wifi size={15} strokeWidth={1.3} color="#e8e8e8" /></TrayWrap>
          <TrayWrap x="w-[23px]"><Volume2 size={16} strokeWidth={1.2} color="#e8e8e8" /></TrayWrap>
          <TrayWrap x="w-[29px]"><Settings size={16} strokeWidth={1.3} color="#e0e0e0" /></TrayWrap>
          <div className="flex flex-col items-center w-[60px] text-[11.5px] leading-[17px] text-[#f0f0f0] ml-[4px]">
            <span>23:19:24</span>
            <span>20.05.2025</span>
          </div>
          <div className="relative flex items-center justify-center w-[53px] mr-[4px] pr-[5px] h-[40px] border-r border-[#666]">
            <svg width="16" height="15" viewBox="0 0 16 15" className="-mt-[6px]"><path d="M0 0H16V11H7L4 14V11H0Z" fill="#fff" /></svg>
            <span className="absolute right-[13px] bottom-[6px] flex items-center justify-center w-[16px] h-[16px] rounded-full bg-[#2b2e36] border border-[#888] text-[10px] font-bold leading-none text-white">6</span>
          </div>
        </div>
      </div>
    </div>
  );
}
